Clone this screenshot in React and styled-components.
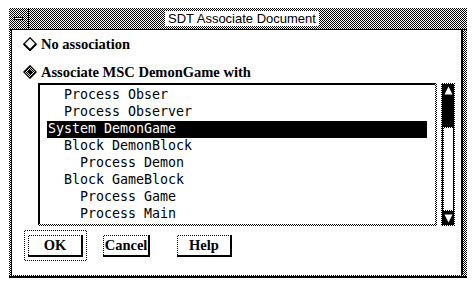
import React from "react";
import styled, { createGlobalStyle } from "styled-components";

const DITHER = "repeating-conic-gradient(#000 0% 25%, #fff 0% 50%) 0 0 / 2px 2px";

const Global = createGlobalStyle`
  html, body { margin: 0; padding: 0; background: #fff; }
  body { width: 475px; height: 284px; overflow: hidden; }
  * { box-sizing: border-box; }
`;

const Screen = styled.div`
  padding: 8px 0 0 9px;
`;

const Window = styled.div`
  width: 458px;
  display: flex;
  flex-direction: column;
`;

const TitleBar = styled.div`
  height: 22px;
  background: ${DITHER};
  border-bottom: 1px solid #000;
  display: flex;
`;

const MenuButton = styled.div`
  width: 20px;
  border-right: 1px solid #000;
  display: flex;
  align-items: center;
  justify-content: center;
`;

const TitleArea = styled.div`
  flex: 1;
  display: flex;
  align-items: center;
  justify-content: center;
  padding-right: 12px;
`;

const TitleLabel = styled.span`
  background: #fff;
  color: #000;
  font: 13px "Liberation Sans", Arial, sans-serif;
  line-height: 15px;
  padding: 0 3px;
`;

const BodyFrame = styled.div`
  background: ${DITHER};
  padding: 0 4px 1px 2px;
  border-bottom: 2px solid #000;
`;

const Body = styled.div`
  background: #fff;
  border-left: 1px solid #000;
  border-right: 2px solid #000;
  padding: 4px 0 14px 11px;
  display: flex;
  flex-direction: column;
`;

const RadioGroup = styled.div`
  display: flex;
  flex-direction: column;
  gap: 8px;
`;

const RadioRow = styled.label`
  display: flex;
  align-items: center;
  gap: 4px;
  height: 20px;
  color: #000;
  font: bold 14.5px "Liberation Serif", "Times New Roman", serif;
`;

const ListRow = styled.div`
  display: flex;
  gap: 4px;
  height: 143px;
  margin: 1px 0 0 15px;
`;

const ListBox = styled.div`
  width: 399px;
  background: ${DITHER};
  padding: 0 2px 2px 0;
`;

const ListInner = styled.div`
  height: 100%;
  background: #fff;
  border-top: 2px solid #000;
  border-left: 2px solid #000;
  padding: 2px 8px 0 7px;
  overflow: hidden;
`;

const Item = styled.div`
  height: 17px;
  line-height: 17px;
  padding-left: ${(p) => 1 + p.$level * 16}px;
  font: 13.3px "DejaVu Sans Mono", "Liberation Mono", monospace;
  white-space: pre;
  background: ${(p) => (p.$selected ? "#000" : "transparent")};
  color: ${(p) => (p.$selected ? "#fff" : "#000")};
`;

const Scrollbar = styled.div`
  width: 14px;
  background: ${DITHER};
  padding: 1px;
`;

const ScrollInner = styled.div`
  height: 100%;
  background: #000;
  display: flex;
  flex-direction: column;
  align-items: center;
`;

const Arrow = styled.div`
  height: ${(p) => p.$h}px;
  width: 100%;
  display: flex;
  align-items: center;
  justify-content: center;
  margin-top: ${(p) => (p.$end ? "auto" : "0")};
`;

const TroughGap = styled.div`
  height: ${(p) => p.$h}px;
`;

const Thumb = styled.div`
  width: 10px;
  height: 84px;
  background: linear-gradient(#fff, #fff) 1px 1px / calc(100% - 1px) calc(100% - 2px) no-repeat,
    ${DITHER};
`;

const ButtonRow = styled.div`
  display: flex;
  align-items: center;
  margin: 4px 0 0 1px;
`;

const DefaultRing = styled.div`
  background: ${DITHER};
  padding: 1px;
`;

const RingInner = styled.div`
  background: #fff;
  padding: 4px 3px 3px 3px;
`;

const PushButton = styled.button`
  width: ${(p) => p.$w}px;
  height: 22px;
  margin-left: ${(p) => p.$gap || 0}px;
  background: ${DITHER};
  border: 0;
  border-right: 2px solid #000;
  border-bottom: 2px solid #000;
  padding: 1px 0 0 1px;
  display: flex;
  cursor: pointer;
`;

const Face = styled.span`
  flex: 1;
  display: flex;
  align-items: center;
  justify-content: center;
  background: #fff;
  color: #000;
  font: bold 14.5px "Liberation Serif", "Times New Roman", serif;
`;

function Diamond({ checked }) {
  return (
    <svg width="14" height="14" viewBox="0 0 14 14">
      <defs>
        <pattern id="dth" width="2" height="2" patternUnits="userSpaceOnUse">
          <rect width="2" height="2" fill="#fff" />
          <rect width="1" height="1" fill="#000" />
          <rect x="1" y="1" width="1" height="1" fill="#000" />
        </pattern>
      </defs>
      <polygon
        points="7,0.8 13.2,7 7,13.2 0.8,7"
        fill={checked ? "url(#dth)" : "#fff"}
        stroke="#000"
        strokeWidth="1.3"
      />
      {checked ? <polygon points="7,4.2 9.8,7 7,9.8 4.2,7" fill="#000" /> : null}
      {!checked ? (
        <polyline points="13.2,7 7,13.2 0.8,7" fill="none" stroke="#000" strokeWidth="1.8" />
      ) : null}
    </svg>
  );
}

function MenuGlyph() {
  return (
    <svg width="11" height="7" viewBox="0 0 11 7">
      <rect x="1.5" y="2.5" width="8" height="2" fill="#fff" stroke="#000" strokeWidth="1" />
    </svg>
  );
}

function UpTriangle() {
  return (
    <svg width="9" height="9" viewBox="0 0 9 9">
      <polygon points="4.5,0.5 8.5,8.5 0.5,8.5" fill="#fff" />
    </svg>
  );
}

function DownTriangle() {
  return (
    <svg width="9" height="9" viewBox="0 0 9 9">
      <polygon points="0.5,0.5 8.5,0.5 4.5,8.5" fill="#fff" />
    </svg>
  );
}

const items = [
  { text: "Process Obser", level: 1 },
  { text: "Process Observer", level: 1 },
  { text: "System DemonGame", level: 0, selected: true },
  { text: "Block DemonBlock", level: 1 },
  { text: "Process Demon", level: 2 },
  { text: "Block GameBlock", level: 1 },
  { text: "Process Game", level: 2 },
  { text: "Process Main", level: 2 },
];

export default function App() {
  return (
    <>
      <Global />
      <Screen>
        <Window>
          <TitleBar>
            <MenuButton>
              <MenuGlyph />
            </MenuButton>
            <TitleArea>
              <TitleLabel>SDT Associate Document</TitleLabel>
            </TitleArea>
          </TitleBar>
          <BodyFrame>
            <Body>
              <RadioGroup>
                <RadioRow>
                  <Diamond />
                  No association
                </RadioRow>
                <RadioRow>
                  <Diamond checked />
                  Associate MSC DemonGame with
                </RadioRow>
              </RadioGroup>
              <ListRow>
                <ListBox>
                  <ListInner>
                    {items.map((it) => (
                      <Item key={it.text} $level={it.level} $selected={it.selected}>
                        {it.text}
                      </Item>
                    ))}
                  </ListInner>
                </ListBox>
                <Scrollbar>
                  <ScrollInner>
                    <Arrow $h={12}>
                      <UpTriangle />
                    </Arrow>
                    <TroughGap $h={31} />
                    <Thumb />
                    <Arrow $h={14} $end>
                      <DownTriangle />
                    </Arrow>
                  </ScrollInner>
                </Scrollbar>
              </ListRow>
              <ButtonRow>
                <DefaultRing>
                  <RingInner>
                    <PushButton $w={55}>
                      <Face>OK</Face>
                    </PushButton>
                  </RingInner>
                </DefaultRing>
                <PushButton $w={47} $gap={16}>
                  <Face>Cancel</Face>
                </PushButton>
                <PushButton $w={55} $gap={27}>
                  <Face>Help</Face>
                </PushButton>
              </ButtonRow>
            </Body>
          </BodyFrame>
        </Window>
      </Screen>
    </>
  );
}
